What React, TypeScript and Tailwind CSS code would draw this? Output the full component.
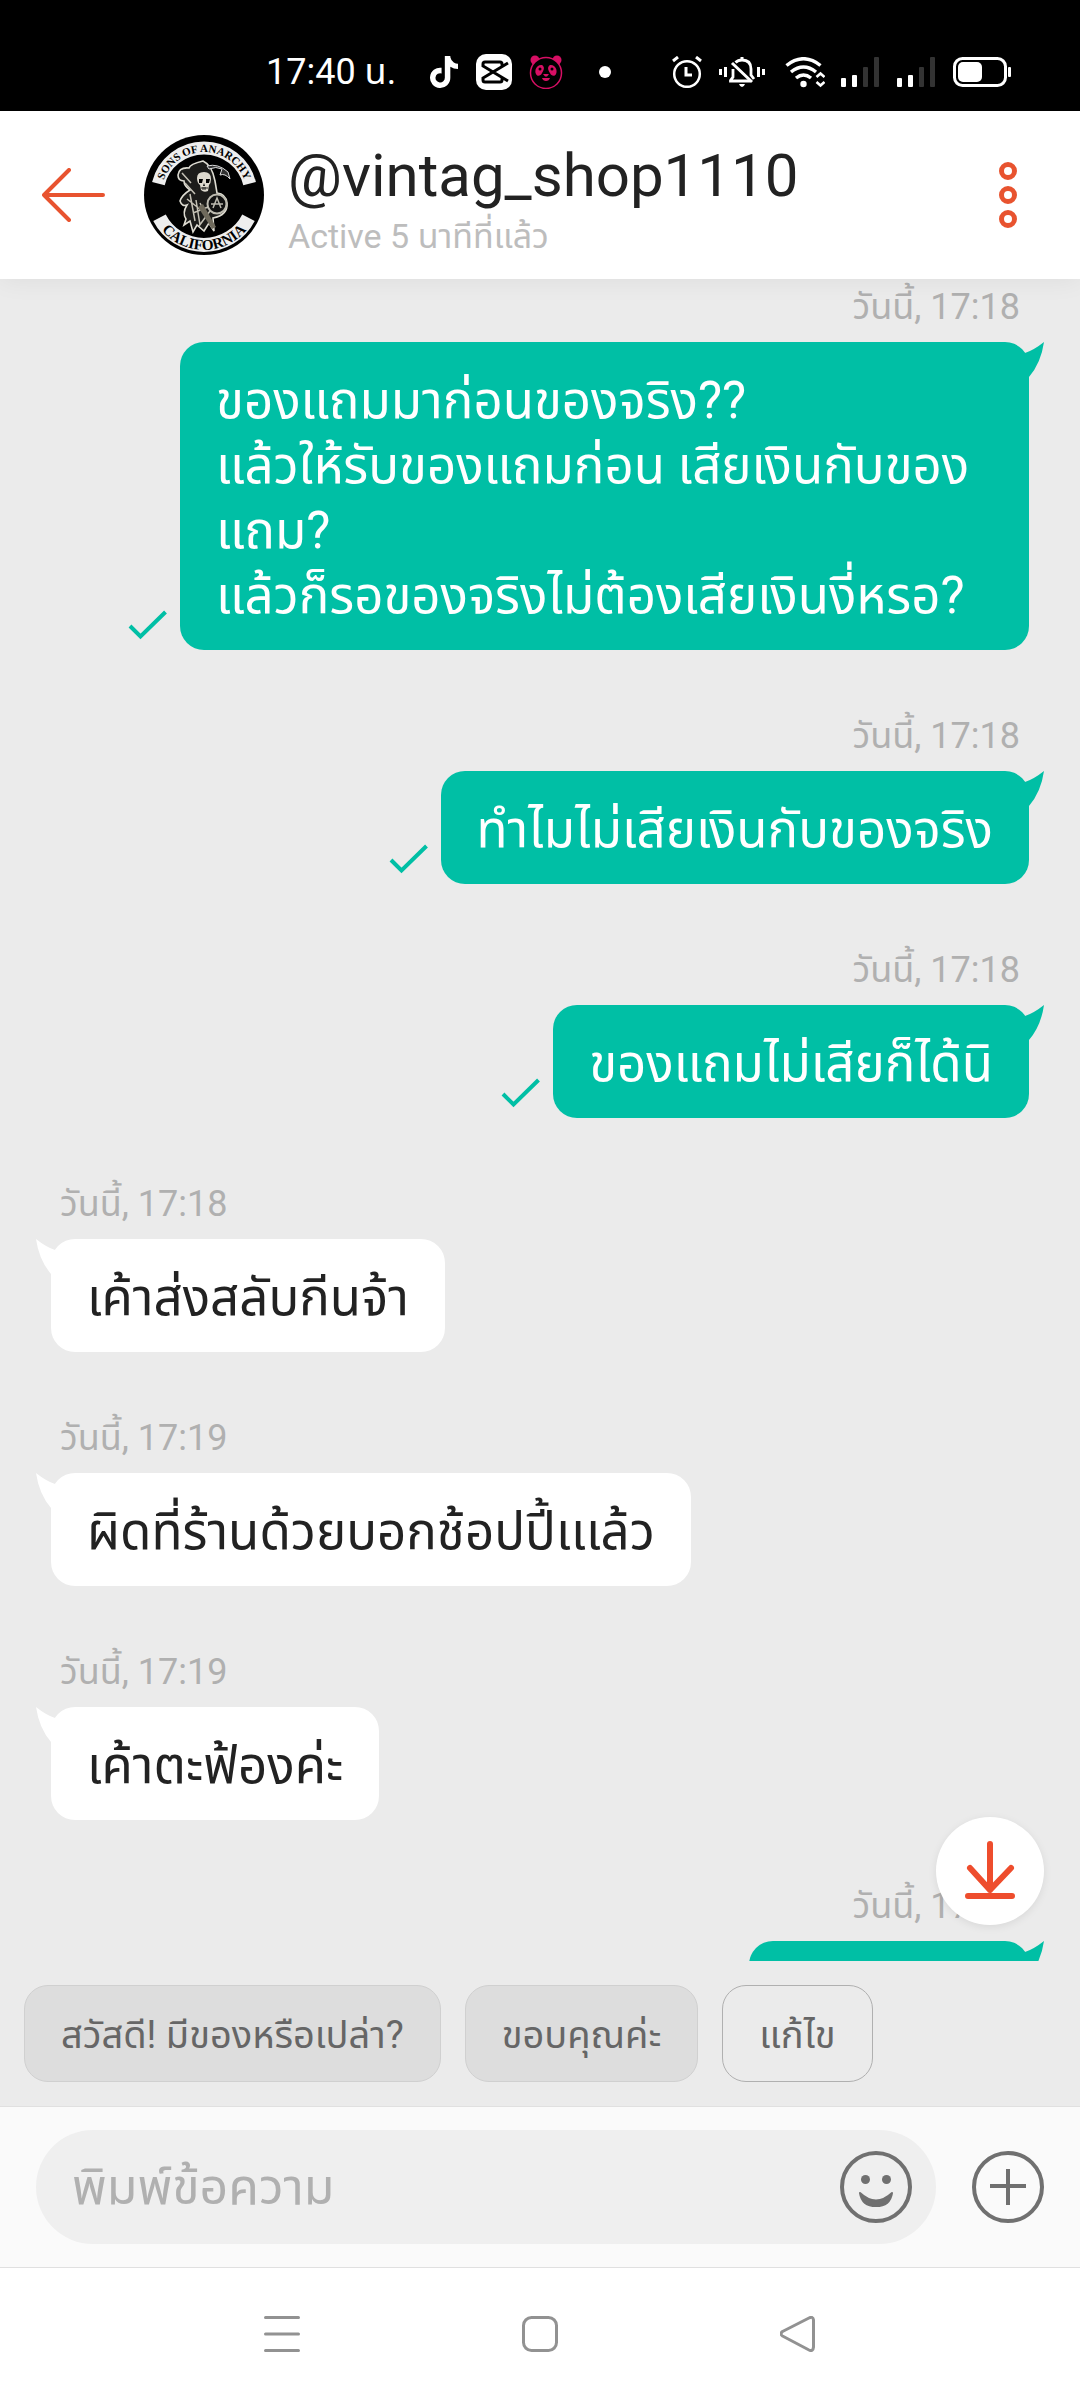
import { useState } from "react";
import { FaTiktok } from "react-icons/fa6";

type Message = {
  id: number;
  from: "me" | "them";
  time: string;
  text: string;
};

const MESSAGES: Message[] = [
  {
    id: 1,
    from: "me",
    time: "วันนี้, 17:18",
    text: "ของแถมมาก่อนของจริง??\nแล้วให้รับของแถมก่อน เสียเงินกับของแถม?\nแล้วก็รอของจริงไม่ต้องเสียเงินงี่หรอ?",
  },
  { id: 2, from: "me", time: "วันนี้, 17:18", text: "ทำไมไม่เสียเงินกับของจริง" },
  { id: 3, from: "me", time: "วันนี้, 17:18", text: "ของแถมไม่เสียก็ได้นิ" },
  { id: 4, from: "them", time: "วันนี้, 17:18", text: "เค้าส่งสลับกีนจ้า" },
  { id: 5, from: "them", time: "วันนี้, 17:19", text: "ผิดที่ร้านด้วยบอกช้อปปี้เเเล้ว" },
  { id: 6, from: "them", time: "วันนี้, 17:19", text: "เค้าตะฟ้องค่ะ" },
  { id: 7, from: "me", time: "วันนี้, 17:19", text: "" },
];

const QUICK_REPLIES = ["สวัสดี! มีของหรือเปล่า?", "ขอบคุณค่ะ"];

function SignalBars() {
  return (
    <svg width="38" height="30" viewBox="0 0 38 30" aria-hidden="true">
      <rect x="0" y="21" width="5" height="9" rx="1" fill="#fff" />
      <rect x="11" y="18" width="5" height="12" rx="1" fill="#fff" />
      <rect x="22" y="10" width="5" height="20" rx="1" fill="#333" />
      <rect x="33" y="0" width="5" height="30" rx="1" fill="#333" />
    </svg>
  );
}

function StatusBar() {
  return (
    <div className="flex h-[111px] shrink-0 items-center justify-between bg-black pt-[33px] pr-[69px] pl-[266px] text-white">
      <div className="flex items-center">
        <span className="text-[36px] leading-[42px] whitespace-nowrap">17:40 น.</span>
        <FaTiktok className="ml-8 h-8 w-8" />
        {/* CapCut */}
        <svg className="ml-4" width="36" height="36" viewBox="0 0 36 36" aria-hidden="true">
          <rect width="36" height="36" rx="10" fill="#fff" />
          <path
            d="M32 9 L7 24 V26 Q7 28 9 28 H24 Q26 28 26 26 V24.500 M32 27 L7 12 V10 Q7 8 9 8 H24 Q26 8 26 10 V11.500"
            fill="none"
            stroke="#000"
            strokeWidth="3"
          />
        </svg>
        {/* foodpanda */}
        <svg className="ml-[17px]" width="34" height="34" viewBox="0 0 34 34" aria-hidden="true">
          <circle cx="6" cy="5" r="4.500" fill="#d70f64" />
          <circle cx="28" cy="5" r="4.500" fill="#d70f64" />
          <circle cx="17" cy="18" r="15.500" fill="#000" stroke="#d70f64" strokeWidth="1.500" />
          <path
            d="M13 10 C8 9 5 15 7 19 C8 22 12 21 13 18 C15 15 16 12 13 10Z M21 10 C26 9 29 15 27 19 C26 22 22 21 21 18 C19 15 18 12 21 10Z"
            fill="#d70f64"
          />
          <circle cx="11" cy="14" r="1.500" fill="#000" />
          <circle cx="23" cy="14" r="1.500" fill="#000" />
          <path d="M14 19 H20 L18 21.500 H16Z M13 23 H21 Q20 26 17 26 Q14 26 13 23Z" fill="#d70f64" />
        </svg>
        <span className="ml-9 h-3 w-3 rounded-full bg-white" />
      </div>

      <div className="flex items-center">
        <svg width="30" height="32" viewBox="0 0 30 32" fill="none" stroke="#fff" strokeWidth="2.500" aria-hidden="true">
          <circle cx="15" cy="18" r="12.800" />
          <path d="M14 11 V19 H20" strokeWidth="3" />
          <path d="M1 5 L6 1 M24 1 L29 5" strokeWidth="3" />
        </svg>
        <svg className="ml-[17px]" width="46" height="30" viewBox="0 0 46 30" fill="none" stroke="#fff" strokeWidth="3" aria-hidden="true">
          <path d="M1.500 12 V18 M6.500 10 V20 M39.500 10 V20 M44.500 12 V18" />
          <path d="M14 12 V20 L11.500 23.500 V24 H31 M16.500 5.500 Q19 3 23 3 Q32 3 32 12 V18 L35 22" strokeWidth="2.800" />
          <path d="M23 0 V3 M13 6 L33 25" />
          <path d="M20 27 H26 Q25 30 23 30 Q21 30 20 27Z" fill="#fff" stroke="none" />
        </svg>
        <svg className="ml-5" width="40" height="31" viewBox="0 0 40 31" fill="none" stroke="#fff" strokeWidth="3.500" aria-hidden="true">
          <path d="M1.500 8.500 Q18.500 -5 35.500 8.500 M6 15 Q18.500 5 31 15 M11 21 Q18.500 15 26 21" />
          <circle cx="18.500" cy="27" r="3.200" fill="#fff" stroke="none" />
          <path d="M31.500 20 L35.500 16.500 L39.500 20 M31.500 25 L35.500 28.500 L39.500 25" strokeWidth="2.600" />
        </svg>
        <span className="ml-4">
          <SignalBars />
        </span>
        <span className="ml-[18px]">
          <SignalBars />
        </span>
        <svg className="ml-[18px]" width="58" height="30" viewBox="0 0 58 30" aria-hidden="true">
          <rect x="1.500" y="1.500" width="51" height="27" rx="8" fill="none" stroke="#fff" strokeWidth="3" />
          <rect x="5" y="5" width="24" height="20" rx="5" fill="#fff" />
          <rect x="55" y="10" width="3" height="10" rx="1" fill="#fff" />
        </svg>
      </div>
    </div>
  );
}

function Avatar() {
  return (
    <svg width="120" height="120" viewBox="0 0 120 120" role="img" aria-label="Sons of Anarchy California">
      <defs>
        <path id="arcTop" d="M17 60 A43 43 0 0 1 103 60" />
        <path id="arcBottom" d="M5 60 A55 55 0 0 0 115 60" />
      </defs>
      <circle cx="60" cy="60" r="60" fill="#000" />
      <path d="M14.400 48.600 A47 47 0 0 1 105.600 48.600" fill="none" stroke="#eee" strokeWidth="13" />
      <path d="M15.500 82.700 A50 50 0 0 0 104.500 82.700" fill="none" stroke="#eee" strokeWidth="14" />
      <g fill="#000" fontFamily="Liberation Serif, serif" fontWeight="700">
        <text fontSize="11" textAnchor="middle">
          <textPath href="#arcTop" startOffset="50%">SONS OF ANARCHY</textPath>
        </text>
        <text fontSize="15" textAnchor="middle">
          <textPath href="#arcBottom" startOffset="50%">CALIFORNIA</textPath>
        </text>
      </g>
      {/* hooded reaper */}
      <path
        d="M59 26 Q46 29 45 33 Q35 32 34 40 Q34 46 40 46 Q40 51 46 55 Q38 60 36 66 Q38 72 43 70 Q38 78 42 84 L40 90 L46 86 L49 97 L53 90 L60 96 L65 88 L70 96 L69 83 Q84 80 83 68 Q82 59 73 58 L71 46 Q68 30 59 26Z"
        fill="#1c1c1a"
        stroke="#dedcd2"
        strokeWidth="1.600"
      />
      <path d="M63 31 Q74 28 84 37 L86 44 Q81 38 76 40 L78 34 Q72 31 65 34Z" fill="#333" stroke="#ddd" strokeWidth="1" />
      <path d="M53 43 Q53 37 60 37 Q67 37 67 44 Q67 48 65 50 L64 56 Q60 58 57 55 L56 50 Q53 48 53 43Z" fill="#ddd9ce" />
      <path d="M55 44 H59 L58 48 H55Z M62 44 H66 L65 48 H62Z M60 48 L61 51 H59Z" fill="#000" />
      <path d="M57 53 H64 M59 52 V55 M61 52 V55" stroke="#000" strokeWidth="0.800" />
      <circle cx="73" cy="69" r="9.500" fill="#111" stroke="#bdbbb0" strokeWidth="2" />
      <path d="M69 73 L73 63 L77 73 M67 69 H79" fill="none" stroke="#bdbbb0" strokeWidth="1.500" />
      <path
        d="M41 48 L51 59 M38 38 L47 48 M43 64 L57 75 M46 59 L51 86 M52 65 L56 90 M49 78 L64 72 M56 68 L68 92 M66 76 L55 91"
        fill="none"
        stroke="#c4c1b5"
        strokeWidth="1.500"
      />
      <path d="M54 72 L59 69 L72 92 L68 94Z" fill="#6f6a5c" />
    </svg>
  );
}

function Header() {
  return (
    <header className="z-10 flex h-[168px] shrink-0 items-center bg-white pr-9 pl-[42px] shadow-[0_2px_24px_rgba(0,0,0,0.06)]">
      <button type="button" aria-label="กลับ">
        <svg width="63" height="54" viewBox="0 0 63 54" fill="none" stroke="#e8532f" strokeWidth="4" strokeLinecap="round" strokeLinejoin="round">
          <path d="M61 27 H2 M27 2 L2 27 L27 52" />
        </svg>
      </button>
      <div className="ml-[39px]">
        <Avatar />
      </div>
      <div className="ml-6 min-w-0 flex-1 pt-2.5">
        <h1 className="truncate text-[60px] leading-[72px] text-[#222]">@vintag_shop1110</h1>
        <p className="text-[34px] leading-[48px] text-[#bdbdbd]">Active 5 นาทีที่แล้ว</p>
      </div>
      <button type="button" aria-label="เมนู" className="flex w-[72px] justify-center">
        <svg width="18" height="66" viewBox="0 0 18 66" fill="none" stroke="#e8532f" strokeWidth="5">
          <circle cx="9" cy="9" r="6.500" />
          <circle cx="9" cy="33" r="6.500" />
          <circle cx="9" cy="57" r="6.500" />
        </svg>
      </button>
    </header>
  );
}

function MessageItem({ message }: { message: Message }) {
  const mine = message.from === "me";

  return (
    <li className={`flex flex-col ${mine ? "items-end" : "items-start"}`}>
      <time className="mb-3.5 px-[9px] text-[36px] leading-[42px] text-[#b0b0b0]">{message.time}</time>
      <div className={`flex items-end ${mine ? "pl-[77px]" : "pr-[77px]"}`}>
        {mine && (
          <svg className="mr-[13px] mb-[10px] shrink-0" width="39" height="30" viewBox="0 0 39 30" fill="none" aria-label="ส่งแล้ว">
            <path d="M2 16 L12.500 26.500 L37.500 2" stroke="#00bfa5" strokeWidth="4" />
          </svg>
        )}
        <div
          className={`relative min-h-[113px] min-w-[280px] rounded-3xl px-9 pt-[26px] pb-[22px] text-[51px] leading-[65px] whitespace-pre-line ${
            mine ? "bg-[#00bfa5] text-white" : "bg-white text-[#222]"
          }`}
        >
          {message.text}
          <svg
            className={`absolute top-0 ${mine ? "-right-[15px]" : "-left-[15px] -scale-x-100"}`}
            width="30"
            height="36"
            viewBox="0 0 30 36"
            aria-hidden="true"
          >
            <path d="M11 11 Q20 8 30 0 Q27 21 15 35 L6 24Z" fill={mine ? "#00bfa5" : "#fff"} />
          </svg>
        </div>
      </div>
    </li>
  );
}

export default function App() {
  const [draft, setDraft] = useState("");

  return (
    <div className="flex h-screen flex-col bg-[#ebebeb] font-[Roboto,'Noto_Sans_Thai','Noto_Sans',sans-serif]">
      <StatusBar />
      <Header />

      <main className="relative min-h-0 flex-1 overflow-hidden">
        <ul className="flex flex-col gap-[65px] px-[51px] pt-[7px]">
          {MESSAGES.map((m) => (
            <MessageItem key={m.id} message={m} />
          ))}
        </ul>
        <button
          type="button"
          aria-label="ไปที่ข้อความล่าสุด"
          className="absolute right-9 bottom-9 flex h-[108px] w-[108px] items-center justify-center rounded-full bg-white shadow-[0_2px_8px_rgba(0,0,0,0.08)]"
        >
          <svg width="50" height="60" viewBox="0 0 50 60" fill="none" stroke="#ee4d2d" strokeWidth="6" strokeLinecap="round" strokeLinejoin="round">
            <path d="M25 3 V49 M5 27 L25 49 L46 27 M3 55 H47" />
          </svg>
        </button>
      </main>

      <div className="flex shrink-0 gap-6 px-6 py-6 text-[38px] leading-[47px] text-[#666]">
        {QUICK_REPLIES.map((reply) => (
          <button
            key={reply}
            type="button"
            onClick={() => setDraft(reply)}
            className="rounded-3xl border border-[#d0d0d0] bg-[#ddd] px-9 pt-[26px] pb-[22px] whitespace-nowrap"
          >
            {reply}
          </button>
        ))}
        <button type="button" className="rounded-3xl border border-[#b0b0b0] px-9 pt-[26px] pb-[22px] whitespace-nowrap">
          แก้ไข
        </button>
      </div>

      <form
        className="flex shrink-0 items-center gap-9 border-t border-[#e0e0e0] bg-[#fafafa] px-9 py-[23px]"
        onSubmit={(e) => {
          e.preventDefault();
          setDraft("");
        }}
      >
        <div className="flex h-[114px] min-w-0 flex-1 items-center rounded-full bg-[#efefef] pr-6 pl-9">
          <input
            aria-label="พิมพ์ข้อความ"
            value={draft}
            onChange={(e) => setDraft(e.target.value)}
            placeholder="พิมพ์ข้อความ"
            className="h-full min-w-0 flex-1 bg-transparent text-[50px] text-[#222] outline-none placeholder:text-[#b0b0b0]"
          />
          <button type="button" aria-label="อีโมจิ">
            <svg width="72" height="72" viewBox="0 0 72 72" fill="none">
              <circle cx="36" cy="36" r="34" stroke="#707070" strokeWidth="4" />
              <circle cx="25.500" cy="28.500" r="4.500" fill="#707070" />
              <circle cx="46.500" cy="28.500" r="4.500" fill="#707070" />
              <path d="M20 42 Q36 57 52 42 Q50 55 36 55 Q22 55 20 42Z" fill="#707070" stroke="#707070" strokeWidth="2" strokeLinejoin="round" />
            </svg>
          </button>
        </div>
        <button type="button" aria-label="เพิ่มเติม">
          <svg width="72" height="72" viewBox="0 0 72 72" fill="none" stroke="#707070" strokeWidth="4">
            <circle cx="36" cy="36" r="34" />
            <path d="M18 35 H54 M36 18 V54" />
          </svg>
        </button>
      </form>

      <nav className="flex h-[133px] shrink-0 items-center justify-center gap-[222px] border-t border-[#e0e0e0] bg-white">
        <button type="button" aria-label="แอปล่าสุด">
          <svg width="36" height="36" viewBox="0 0 36 36" stroke="#929292" strokeWidth="3" strokeLinecap="round">
            <path d="M1.500 1.500 H34.500 M1.500 18 H34.500 M1.500 34.500 H34.500" />
          </svg>
        </button>
        <button type="button" aria-label="หน้าหลัก">
          <svg width="36" height="36" viewBox="0 0 36 36" fill="none" stroke="#929292" strokeWidth="3">
            <rect x="1.500" y="1.500" width="33" height="33" rx="8" />
          </svg>
        </button>
        <button type="button" aria-label="ย้อนกลับ">
          <svg width="36" height="36" viewBox="0 0 36 36" fill="none" stroke="#929292" strokeWidth="3">
            <path d="M2.500 15.500 L29 2 Q33 0 33.500 4 V31 Q33 36 29 34 L2.500 20 Q-0.500 18 2.500 15.500Z" strokeLinejoin="round" />
          </svg>
        </button>
      </nav>
    </div>
  );
}
